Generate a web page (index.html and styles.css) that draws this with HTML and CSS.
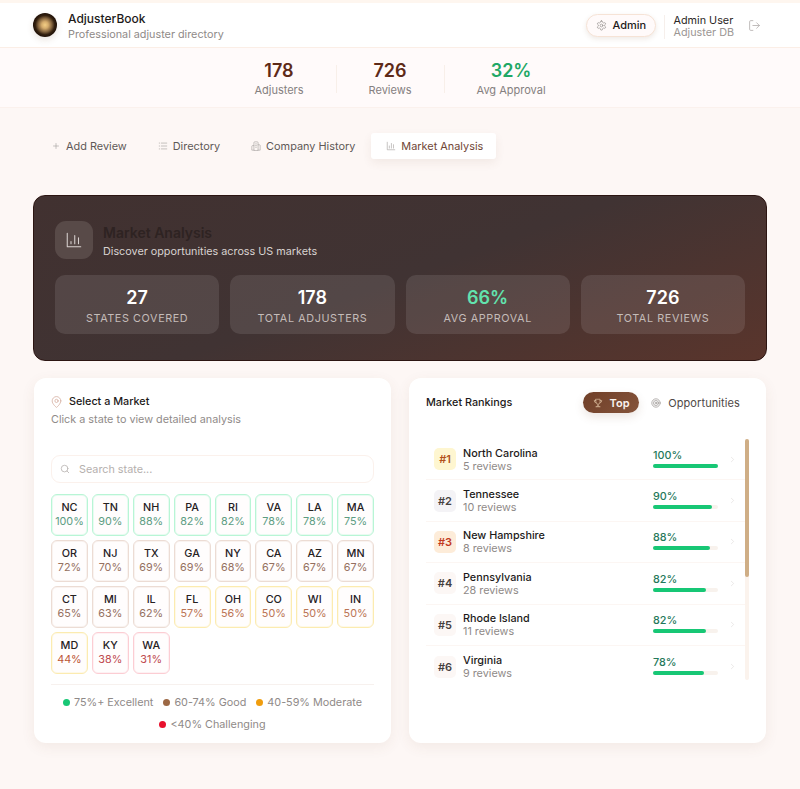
FILE: index.html
```html
<!DOCTYPE html>
<html lang="en">
<head>
    <meta charset="UTF-8">
    <meta name="viewport" content="width=device-width, initial-scale=1.0">
    <title>AdjusterBook - Market Analysis</title>
    <link rel="stylesheet" href="styles.css">
</head>
<body>
    <header class="topbar">
        <div class="brand">
            <div class="logo"></div>
            <div class="brand-text">
                <div class="brand-name">AdjusterBook</div>
                <div class="brand-sub">Professional adjuster directory</div>
            </div>
        </div>
        <div class="account">
            <button class="admin-btn">
                <svg class="gear" viewBox="0 0 24 24"><path d="M12.220 2h-.44a2 2 0 0 0-2 2v.18a2 2 0 0 1-1 1.730l-.43.25a2 2 0 0 1-2 0l-.15-.08a2 2 0 0 0-2.730.73l-.22.38a2 2 0 0 0 .73 2.730l.15.1a2 2 0 0 1 1 1.720v.51a2 2 0 0 1-1 1.740l-.15.09a2 2 0 0 0-.73 2.730l.22.38a2 2 0 0 0 2.730.73l.15-.08a2 2 0 0 1 2 0l.43.25a2 2 0 0 1 1 1.730V20a2 2 0 0 0 2 2h.44a2 2 0 0 0 2-2v-.18a2 2 0 0 1 1-1.730l.43-.25a2 2 0 0 1 2 0l.15.08a2 2 0 0 0 2.730-.73l.22-.39a2 2 0 0 0-.73-2.730l-.15-.08a2 2 0 0 1-1-1.740v-.5a2 2 0 0 1 1-1.740l.15-.09a2 2 0 0 0 .73-2.730l-.22-.38a2 2 0 0 0-2.730-.73l-.15.08a2 2 0 0 1-2 0l-.43-.25a2 2 0 0 1-1-1.730V4a2 2 0 0 0-2-2z"/><circle cx="12" cy="12" r="3"/></svg>
                Admin
            </button>
            <div class="user">
                <div class="user-name">Admin User</div>
                <div class="user-db">Adjuster DB</div>
            </div>
            <svg class="logout" viewBox="0 0 24 24"><path d="M9 3H5a2 2 0 0 0-2 2v14a2 2 0 0 0 2 2h4"/><path d="M16 17l5-5-5-5"/><path d="M21 12H9"/></svg>
        </div>
    </header>

    <section class="summary">
        <div class="summary-item">
            <div class="summary-num">178</div>
            <div class="summary-label">Adjusters</div>
        </div>
        <div class="summary-item">
            <div class="summary-num">726</div>
            <div class="summary-label">Reviews</div>
        </div>
        <div class="summary-item">
            <div class="summary-num green">32%</div>
            <div class="summary-label">Avg Approval</div>
        </div>
    </section>

    <nav class="tabs">
        <a class="tab" href="#">
            <svg viewBox="0 0 24 24"><path d="M6 12h12M12 6v12"/></svg>
            Add Review
        </a>
        <a class="tab" href="#">
            <svg viewBox="0 0 24 24"><path d="M8 5h13M8 12h13M8 19h13M3 5h1M3 12h1M3 19h1"/></svg>
            Directory
        </a>
        <a class="tab" href="#">
            <svg viewBox="0 0 24 24"><path d="M7 22V4a2 2 0 0 1 2-2h6a2 2 0 0 1 2 2v18z"/><path d="M7 11H4a2 2 0 0 0-2 2v9h5M17 9h3a2 2 0 0 1 2 2v11h-5M11 7h2M11 11h2M11 15h2"/></svg>
            Company History
        </a>
        <a class="tab active" href="#">
            <svg viewBox="0 0 24 24"><path d="M3 3v18h18M8 17v-5M13 17V6M18 17v-8"/></svg>
            Market Analysis
        </a>
    </nav>

    <main class="content">
        <section class="hero">
            <div class="hero-head">
                <div class="hero-icon">
                    <svg viewBox="0 0 24 24"><path d="M3 3v18h18M8 17v-3M13 17V6M18 17V9"/></svg>
                </div>
                <div class="hero-text">
                    <h1>Market Analysis</h1>
                    <p>Discover opportunities across US markets</p>
                </div>
            </div>
            <div class="hero-stats">
                <div class="hero-stat">
                    <div class="hero-num">27</div>
                    <div class="hero-label">States Covered</div>
                </div>
                <div class="hero-stat">
                    <div class="hero-num">178</div>
                    <div class="hero-label">Total Adjusters</div>
                </div>
                <div class="hero-stat">
                    <div class="hero-num mint">66%</div>
                    <div class="hero-label">Avg Approval</div>
                </div>
                <div class="hero-stat">
                    <div class="hero-num">726</div>
                    <div class="hero-label">Total Reviews</div>
                </div>
            </div>
        </section>

        <div class="panels">
            <section class="panel">
                <div class="panel-title">
                    <svg class="pin" viewBox="0 0 24 24"><path d="M20 10c0 6-8 12-8 12s-8-6-8-12a8 8 0 0 1 16 0z"/><circle cx="12" cy="10" r="3"/></svg>
                    Select a Market
                </div>
                <p class="panel-sub">Click a state to view detailed analysis</p>
                <div class="search">
                    <svg viewBox="0 0 24 24"><circle cx="11" cy="11" r="8"/><path d="M21 21l-4.300-4.300"/></svg>
                    <span>Search state...</span>
                </div>
                <div class="state-grid">
                    <div class="state high"><b>NC</b><span>100%</span></div>
                    <div class="state high"><b>TN</b><span>90%</span></div>
                    <div class="state high"><b>NH</b><span>88%</span></div>
                    <div class="state high"><b>PA</b><span>82%</span></div>
                    <div class="state high"><b>RI</b><span>82%</span></div>
                    <div class="state high"><b>VA</b><span>78%</span></div>
                    <div class="state high"><b>LA</b><span>78%</span></div>
                    <div class="state high"><b>MA</b><span>75%</span></div>
                    <div class="state good"><b>OR</b><span>72%</span></div>
                    <div class="state good"><b>NJ</b><span>70%</span></div>
                    <div class="state good"><b>TX</b><span>69%</span></div>
                    <div class="state good"><b>GA</b><span>69%</span></div>
                    <div class="state good"><b>NY</b><span>68%</span></div>
                    <div class="state good"><b>CA</b><span>67%</span></div>
                    <div class="state good"><b>AZ</b><span>67%</span></div>
                    <div class="state good"><b>MN</b><span>67%</span></div>
                    <div class="state good"><b>CT</b><span>65%</span></div>
                    <div class="state good"><b>MI</b><span>63%</span></div>
                    <div class="state good"><b>IL</b><span>62%</span></div>
                    <div class="state mid"><b>FL</b><span>57%</span></div>
                    <div class="state mid"><b>OH</b><span>56%</span></div>
                    <div class="state mid"><b>CO</b><span>50%</span></div>
                    <div class="state mid"><b>WI</b><span>50%</span></div>
                    <div class="state mid"><b>IN</b><span>50%</span></div>
                    <div class="state mid low-text"><b>MD</b><span>44%</span></div>
                    <div class="state low"><b>KY</b><span>38%</span></div>
                    <div class="state low"><b>WA</b><span>31%</span></div>
                </div>
                <div class="legend">
                    <span class="legend-item"><i class="dot dot-green"></i>75%+ Excellent</span>
                    <span class="legend-item"><i class="dot dot-brown"></i>60-74% Good</span>
                    <span class="legend-item"><i class="dot dot-orange"></i>40-59% Moderate</span>
                    <span class="legend-item"><i class="dot dot-red"></i>&lt;40% Challenging</span>
                </div>
            </section>

            <section class="panel rankings">
                <div class="rank-head">
                    <div class="rank-title">Market Rankings</div>
                    <div class="toggle">
                        <button class="toggle-btn on">
                            <svg viewBox="0 0 24 24"><path d="M7 3h10v7a5 5 0 0 1-10 0zM7 6H3v1a4 4 0 0 0 4 4M17 6h4v1a4 4 0 0 1-4 4M12 15v4M7 21h10M9 21l1-2h4l1 2"/></svg>
                            Top
                        </button>
                        <button class="toggle-btn">
                            <svg viewBox="0 0 24 24"><circle cx="12" cy="12" r="10"/><circle cx="12" cy="12" r="6"/><circle cx="12" cy="12" r="2"/></svg>
                            Opportunities
                        </button>
                    </div>
                </div>
                <div class="rank-body">
                    <div class="rank-list">
                        <div class="rank-row">
                            <div class="rank-badge gold">#1</div>
                            <div class="rank-info"><div class="rank-name">North Carolina</div><div class="rank-sub">5 reviews</div></div>
                            <div class="rank-score"><div class="rank-pct">100%</div><div class="track"><div class="fill" style="width:100%"></div></div></div>
                            <svg class="chev" viewBox="0 0 24 24"><path d="M9 6l6 6-6 6"/></svg>
                        </div>
                        <div class="rank-row">
                            <div class="rank-badge silver">#2</div>
                            <div class="rank-info"><div class="rank-name">Tennessee</div><div class="rank-sub">10 reviews</div></div>
                            <div class="rank-score"><div class="rank-pct">90%</div><div class="track"><div class="fill" style="width:90%"></div></div></div>
                            <svg class="chev" viewBox="0 0 24 24"><path d="M9 6l6 6-6 6"/></svg>
                        </div>
                        <div class="rank-row">
                            <div class="rank-badge bronze">#3</div>
                            <div class="rank-info"><div class="rank-name">New Hampshire</div><div class="rank-sub">8 reviews</div></div>
                            <div class="rank-score"><div class="rank-pct">88%</div><div class="track"><div class="fill" style="width:88%"></div></div></div>
                            <svg class="chev" viewBox="0 0 24 24"><path d="M9 6l6 6-6 6"/></svg>
                        </div>
                        <div class="rank-row">
                            <div class="rank-badge">#4</div>
                            <div class="rank-info"><div class="rank-name">Pennsylvania</div><div class="rank-sub">28 reviews</div></div>
                            <div class="rank-score"><div class="rank-pct">82%</div><div class="track"><div class="fill" style="width:82%"></div></div></div>
                            <svg class="chev" viewBox="0 0 24 24"><path d="M9 6l6 6-6 6"/></svg>
                        </div>
                        <div class="rank-row">
                            <div class="rank-badge">#5</div>
                            <div class="rank-info"><div class="rank-name">Rhode Island</div><div class="rank-sub">11 reviews</div></div>
                            <div class="rank-score"><div class="rank-pct">82%</div><div class="track"><div class="fill" style="width:82%"></div></div></div>
                            <svg class="chev" viewBox="0 0 24 24"><path d="M9 6l6 6-6 6"/></svg>
                        </div>
                        <div class="rank-row last">
                            <div class="rank-badge">#6</div>
                            <div class="rank-info"><div class="rank-name">Virginia</div><div class="rank-sub">9 reviews</div></div>
                            <div class="rank-score"><div class="rank-pct">78%</div><div class="track"><div class="fill" style="width:78%"></div></div></div>
                            <svg class="chev" viewBox="0 0 24 24"><path d="M9 6l6 6-6 6"/></svg>
                        </div>
                    </div>
                    <div class="scroll-track"><div class="scroll-thumb"></div></div>
                </div>
            </section>
        </div>
    </main>
</body>
</html>
```

FILE: styles.css
```css
* {
    box-sizing: border-box;
}
body {
    font-family: Inter, "Liberation Sans", sans-serif;
    font-size: 10.8px;
    margin: 0;
    padding: 0;
    background-color: #fdf7f5;
    color: #1d1a19;
    min-height: 789px;
}
svg {
    fill: none;
    stroke: currentColor;
    stroke-width: 2;
    stroke-linecap: round;
    stroke-linejoin: round;
    flex: none;
}
.topbar {
    display: flex;
    justify-content: space-between;
    align-items: center;
    height: 48px;
    padding: 0 39px 0 33px;
    background-color: #fff;
    border-top: 3px solid #fef6ef;
    border-bottom: 1px solid #fbeee6;
}
.brand {
    display: flex;
    align-items: center;
    gap: 11px;
}
.brand-text {
    padding-top: 2px;
}
.logo {
    width: 24px;
    height: 24px;
    border-radius: 50%;
    background: radial-gradient(circle closest-side, #f3cf85 0%, #d4ab6c 28%, #80613c 58%, #33200f 80%, #1f1006 100%);
    box-shadow: 0 3px 6px rgba(120, 80, 50, 0.15);
}
.brand-name {
    font-size: 12px;
    font-weight: 500;
    line-height: 16px;
}
.brand-sub {
    line-height: 15px;
    color: #8f8a88;
}
.account {
    display: flex;
    align-items: center;
}
.admin-btn {
    display: flex;
    align-items: center;
    gap: 6px;
    height: 23px;
    width: 70px;
    padding: 0 9px;
    font-family: inherit;
    font-size: 11px;
    font-weight: 500;
    color: #1d1a19;
    background-color: #fffafa;
    border: 1px solid #f6e3d6;
    border-radius: 12px;
    box-shadow: 0 2px 5px rgba(120, 80, 50, 0.12);
}
.gear {
    width: 11px;
    height: 11px;
    color: #8f8a88;
    stroke-width: 1.5;
}
.user {
    margin: 4px 0 0 8px;
    padding-left: 9px;
    border-left: 1px solid #f6efeb;
    line-height: 12px;
}
.user-name {
    color: #2b2725;
}
.user-db {
    color: #9b9694;
}
.logout {
    width: 13px;
    height: 13px;
    margin-left: 14px;
    color: #b3aeac;
    stroke-width: 1.5;
}
.summary {
    display: flex;
    justify-content: center;
    height: 60px;
    padding-top: 14px;
    background-color: #fffafa;
    border-bottom: 1px solid #fbf1ed;
}
.summary-item {
    height: 28px;
    margin-top: 3px;
    padding: 0 32px;
    text-align: center;
    border-left: 1px solid #f8efe9;
}
.summary-item:first-child {
    border-left: 0;
}
.summary-num {
    margin-top: -4px;
    font-size: 18px;
    font-weight: 600;
    line-height: 20px;
    color: #5e2a18;
}
.summary-num.green {
    color: #1fa866;
}
.summary-label {
    margin-top: 2px;
    font-size: 11px;
    line-height: 14px;
    color: #858080;
}
.tabs {
    display: flex;
    gap: 1px;
    margin-top: 25px;
    padding-left: 36px;
}
.tab {
    display: flex;
    align-items: center;
    gap: 5px;
    height: 26px;
    padding: 0 15px;
    font-size: 10.9px;
    color: #5f5957;
    text-decoration: none;
}
.tab svg {
    width: 10px;
    height: 10px;
    color: #a5a09e;
    stroke-width: 1.5;
}
.tab.active {
    padding-right: 13px;
    color: #704636;
    background-color: #fff;
    border-radius: 3px;
    box-shadow: 0 4px 10px rgba(120, 80, 50, 0.08);
}
.content {
    padding: 36px 33px 0;
}
.hero {
    height: 166px;
    padding: 25px 21px 0;
    border: 1px solid #2c1512;
    border-radius: 12px;
    background: linear-gradient(160deg, #413130 0%, #403333 50%, #5a352c 100%);
}
.hero-head {
    display: flex;
    align-items: center;
    gap: 10px;
}
.hero-text {
    padding-top: 2px;
}
.hero-icon {
    display: flex;
    align-items: center;
    justify-content: center;
    width: 38px;
    height: 38px;
    border-radius: 11px;
    background-color: #584a48;
    color: #d9d2d0;
}
.hero-icon svg {
    width: 18px;
    height: 18px;
    stroke-width: 1.4;
}
.hero h1 {
    margin: 0;
    font-size: 14px;
    font-weight: 600;
    line-height: 18px;
    color: #2e2322;
}
.hero p {
    margin: 2px 0 0;
    line-height: 15px;
    color: #d8d2d0;
}
.hero-stats {
    display: grid;
    grid-template-columns: repeat(4, 1fr);
    gap: 11px;
    margin-top: 16px;
}
.hero-stat {
    height: 59px;
    padding-top: 12px;
    text-align: center;
    border-radius: 10px;
    background-color: rgba(255, 255, 255, 0.1);
}
.hero-num {
    font-size: 18px;
    font-weight: 600;
    line-height: 22px;
    color: #fff;
}
.hero-num.mint {
    color: #62e3ae;
}
.hero-label {
    margin-top: 3px;
    line-height: 14px;
    letter-spacing: 0.6px;
    text-transform: uppercase;
    color: #c4bcb9;
}
.panels {
    display: grid;
    grid-template-columns: 1fr 1fr;
    gap: 18px;
    margin: 17px 1px 0;
}
.panel {
    height: 365px;
    padding: 16px 17px 0;
    background-color: #fff;
    border-radius: 12px;
    box-shadow: 0 4px 14px rgba(120, 80, 50, 0.08);
}
.panel-title {
    display: flex;
    align-items: center;
    gap: 6px;
    font-weight: 500;
    line-height: 16px;
}
.pin {
    width: 13px;
    height: 14px;
    margin-left: -1px;
    color: #d4aa9c;
    stroke-width: 1.4;
}
.panel-sub {
    margin: 2px 0 0;
    line-height: 15px;
    color: #908b89;
}
.search {
    display: flex;
    align-items: center;
    gap: 9px;
    height: 28px;
    margin-top: 28px;
    padding-left: 8px;
    color: #b5b0ae;
    border: 1px solid #fbf1ec;
    border-radius: 9px;
}
.search svg {
    width: 10px;
    height: 10px;
    color: #b9b4b2;
}
.state-grid {
    display: grid;
    grid-template-columns: repeat(8, 1fr);
    gap: 4px;
    margin-top: 11px;
}
.state {
    display: flex;
    flex-direction: column;
    align-items: center;
    justify-content: center;
    height: 42px;
    border: 1px solid;
    border-radius: 6px;
    background-color: #fffdfd;
}
.state b {
    font-weight: 500;
    line-height: 14px;
    color: #26211f;
}
.state span {
    line-height: 14px;
}
.state.high {
    border-color: #b8f5d5;
    box-shadow: inset 0 0 0 1px #e8fbf1;
}
.state.high span {
    color: #5c9c82;
}
.state.good {
    border-color: #ecdcd4;
    box-shadow: inset 0 0 0 1px #f9f3f0;
}
.state.good span {
    color: #95705f;
}
.state.mid {
    border-color: #fcebb0;
    box-shadow: inset 0 0 0 1px #fef9e8;
}
.state.mid span {
    color: #bb7454;
}
.state.mid.low-text span {
    color: #bc5536;
}
.state.low {
    border-color: #fccdd3;
    box-shadow: inset 0 0 0 1px #fef1f3;
}
.state.low span {
    color: #c04a50;
}
.legend {
    display: flex;
    flex-wrap: wrap;
    justify-content: center;
    gap: 7px 10px;
    margin-top: 10px;
    padding-top: 10px;
    border-top: 1px solid #f7f1ee;
    line-height: 15px;
    color: #8f8a88;
}
.legend-item {
    display: flex;
    align-items: center;
    gap: 4px;
}
.dot {
    width: 7px;
    height: 7px;
    border-radius: 50%;
}
.dot-green {
    background-color: #17c775;
}
.dot-brown {
    background-color: #9c6844;
}
.dot-orange {
    background-color: #f09d0e;
}
.dot-red {
    background-color: #e8112d;
}
.rankings {
    padding: 14px 0 0 17px;
}
.rank-head {
    display: flex;
    justify-content: space-between;
    align-items: center;
    height: 21px;
    padding-right: 26px;
}
.rank-title {
    padding-bottom: 1px;
    font-weight: 500;
}
.toggle {
    display: flex;
    align-items: center;
    gap: 12px;
}
.toggle-btn {
    display: flex;
    align-items: center;
    gap: 7px;
    height: 21px;
    padding: 0;
    font-family: inherit;
    font-size: 11px;
    letter-spacing: 0.1px;
    color: #4e4846;
    background: none;
    border: 0;
}
.toggle-btn svg {
    width: 10px;
    height: 10px;
    color: #a5a09e;
}
.toggle-btn.on {
    width: 56px;
    justify-content: center;
    font-weight: 600;
    color: #fbf3ee;
    border-radius: 11px;
    background: linear-gradient(135deg, #6f3f28, #85543b);
    box-shadow: 0 4px 10px rgba(120, 80, 50, 0.14);
}
.toggle-btn.on svg {
    color: #e5c9a9;
    stroke-width: 1.5;
}
.rank-body {
    display: flex;
    height: 241px;
    margin: 26px 17px 0 0;
}
.rank-list {
    flex: 1;
}
.scroll-track {
    width: 4px;
    background-color: #fbf3ed;
    border-radius: 2px;
}
.scroll-thumb {
    height: 138px;
    background-color: #cfae86;
    border-radius: 2px;
}
.rank-row {
    display: flex;
    align-items: center;
    height: 41.4px;
    padding: 0 8px;
    border-bottom: 1px solid #fcf6f3;
}
.rank-row.last {
    border-bottom: 0;
}
.rank-badge {
    display: flex;
    align-items: center;
    justify-content: center;
    width: 22px;
    height: 22px;
    font-size: 11px;
    font-weight: 600;
    color: #45403e;
    background-color: #fcf7f5;
    border-radius: 5px;
}
.rank-badge.gold {
    color: #b2511b;
    background-color: #fef6d0;
}
.rank-badge.silver {
    background-color: #f4f3f6;
}
.rank-badge.bronze {
    color: #c1391d;
    background-color: #fdecd9;
}
.rank-info {
    flex: 1;
    margin-left: 7px;
    padding-top: 2px;
}
.rank-name {
    font-weight: 450;
    line-height: 12px;
}
.rank-sub {
    line-height: 13px;
    color: #8f8a88;
}
.rank-score {
    width: 65px;
    margin-bottom: 2px;
}
.rank-pct {
    font-weight: 500;
    line-height: 14px;
    color: #24785a;
}
.track {
    height: 4px;
    margin-top: 1px;
    border-radius: 2px;
    background-color: #f8f2ed;
}
.fill {
    height: 4px;
    border-radius: 2px;
    background-color: #17c775;
}
.chev {
    width: 9px;
    height: 9px;
    margin-left: 10px;
    color: #dcd8d6;
    stroke-width: 1.5;
}
```
